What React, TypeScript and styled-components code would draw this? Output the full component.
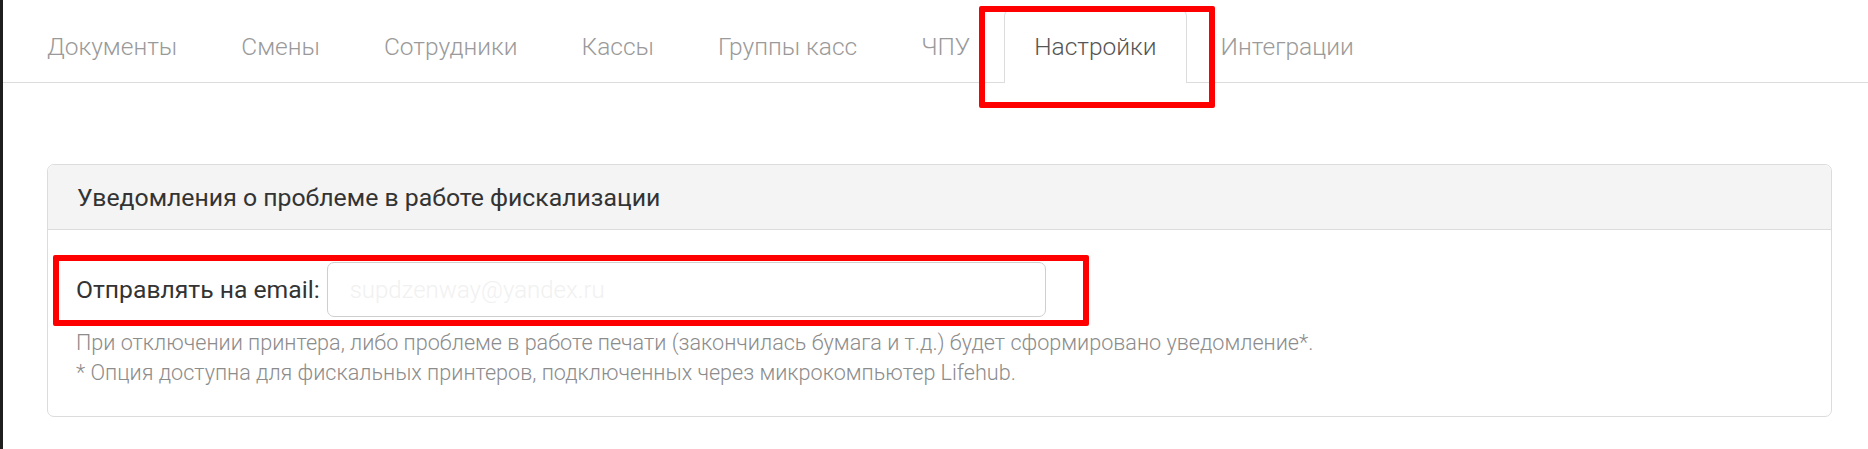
import { createGlobalStyle, styled } from 'styled-components'

const tabs = ['Документы', 'Смены', 'Сотрудники', 'Кассы', 'Группы касс', 'ЧПУ', 'Настройки', 'Интеграции']
const active = 'Настройки'

const App = () => {
    return (
        <Page>
            <Global />
            <Nav>
                {
                    tabs.map((t) => (
                        <TabItem key={t}>
                            <TabLink $active={t === active}>{t}</TabLink>
                            {t === active && <Marker $top={-3} $left={-25} $width={236} $height={102} />}
                        </TabItem>
                    ))
                }
            </Nav>
            <Panel>
                <PanelHead>Уведомления о проблеме в работе фискализации</PanelHead>
                <PanelBody>
                    <Row>
                        <Label>Отправлять на email:</Label>
                        <Input defaultValue="supdzenway@yandex.ru" />
                        <Marker $top={-7} $left={-23} $width={1036} $height={71} />
                    </Row>
                    <Help>
                        При отключении принтера, либо проблеме в работе печати (закончилась бумага и т.д.) будет сформировано уведомление*.
                        <br />
                        * Опция доступна для фискальных принтеров, подключенных через микрокомпьютер Lifehub.
                    </Help>
                </PanelBody>
            </Panel>
        </Page>
    )
}

export default App

const Global = createGlobalStyle`
body {
    margin: 0;
    background: #fff;
    font-family: Roboto, "Liberation Sans", sans-serif;
}
* { box-sizing: border-box; }
`

const Page = styled.div`
min-height: 100vh;
border-left: 3px solid #1f1f1f;
overflow: hidden;
`

const Nav = styled.div`
display: flex;
padding: 9px 0 0 14px;
height: 83px;
border-bottom: 1px solid #dcdcdc;
`

const TabItem = styled.div`
position: relative;
margin-right: 4px;
display: flex;
`

const TabLink = styled.div<{ $active: boolean }>`
display: flex;
align-items: center;
padding: 0 29px;
height: 74px;
font-size: 24.5px;
font-weight: 300;
color: ${(p) => (p.$active ? '#555' : '#9a9a9a')};
background: ${(p) => (p.$active ? '#fff' : 'transparent')};
border: 1px solid ${(p) => (p.$active ? '#dcdcdc' : 'transparent')};
border-bottom: none;
border-radius: 7px 7px 0 0;
margin-bottom: -1px;
`

const Marker = styled.div<{ $top: number; $left: number; $width: number; $height: number }>`
position: absolute;
top: ${(p) => p.$top}px;
left: ${(p) => p.$left}px;
width: ${(p) => p.$width}px;
height: ${(p) => p.$height}px;
border: 6px solid #ff0000;
border-radius: 2px;
pointer-events: none;
`

const Panel = styled.div`
margin: 81px 36px 0 44px;
border: 1px solid #dcdcdc;
border-radius: 7px;
`

const PanelHead = styled.div`
height: 65px;
display: flex;
align-items: center;
padding-left: 29px;
background: #f4f4f4;
border-bottom: 1px solid #dcdcdc;
border-radius: 7px 7px 0 0;
font-size: 24.8px;
color: #333;
`

const PanelBody = styled.div`
padding: 32px 28px 28px;
`

const Row = styled.div`
position: relative;
display: flex;
align-items: center;
gap: 7px;
`

const Label = styled.div`
font-size: 24.7px;
color: #333;
`

const Input = styled.input`
width: 719px;
height: 55px;
border: 1px solid #cfcfcf;
border-radius: 7px;
padding: 0 22px;
font-family: Roboto, "Liberation Sans", sans-serif;
font-size: 24px;
font-weight: 300;
color: #f1f1f1;
outline: none;
`

const Help = styled.div`
margin-top: 11px;
font-size: 21.6px;
font-weight: 300;
line-height: 30px;
color: #8c8c8c;
`
